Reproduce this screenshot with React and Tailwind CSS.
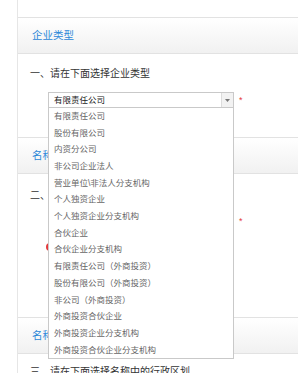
import { useState } from "react";

const options = [
  "有限责任公司",
  "股份有限公司",
  "内资分公司",
  "非公司企业法人",
  "营业单位\\非法人分支机构",
  "个人独资企业",
  "个人独资企业分支机构",
  "合伙企业",
  "合伙企业分支机构",
  "有限责任公司（外商投资）",
  "股份有限公司（外商投资）",
  "非公司（外商投资）",
  "外商投资合伙企业",
  "外商投资企业分支机构",
  "外商投资合伙企业分支机构",
];

function SectionHeader({ title }) {
  return (
    <div className="flex h-[37px] items-center border-y border-[#e2e2e2] bg-gradient-to-b from-white to-[#f1f1f1] pl-[14px] text-[10.5px] text-[#2b87d8]">
      {title}
    </div>
  );
}

function Star() {
  return <span className="ml-[5px] text-[9px] leading-none text-[#e4393c]">*</span>;
}

export default function App() {
  const [value] = useState(options[0]);

  return (
    <div
      className="h-[373px] w-[298px] overflow-hidden bg-white text-[#333]"
      style={{ fontFamily: '"Liberation Sans", "Noto Sans CJK SC", sans-serif' }}
    >
      <div className="ml-[17px] h-full border-l border-[#e6e6e6]">
        <div className="h-[17px]" />

        <SectionHeader title="企业类型" />
        <div className="h-[83px] pl-[12px] pt-[10px]">
          <div className="text-[10px] leading-[20px]">一、请在下面选择企业类型</div>
          <div className="mt-[8px] flex items-center pl-[18px]">
            <div className="relative z-10">
              <div className="flex h-[16px] w-[186px] items-center border border-[#c9c9c9] bg-white">
                <span className="flex-1 pl-[5px] text-[8.5px] text-[#222]">{value}</span>
                <span className="flex h-full w-[12px] items-center justify-center border-l border-[#dcdcdc] bg-[#f2f2f2]">
                  <svg width="5" height="3" viewBox="0 0 5 3">
                    <path d="M0 0h5L2.5 3z" fill="#777" />
                  </svg>
                </span>
              </div>
              <ul className="absolute left-0 top-full w-[186px] border border-t-0 border-[#c9c9c9] bg-white">
                {options.map((o) => (
                  <li key={o} className="flex h-[16.7px] items-center pl-[5px] text-[8.5px] text-[#666]">
                    {o}
                  </li>
                ))}
              </ul>
            </div>
            <Star />
          </div>
        </div>

        <SectionHeader title="名称信息" />
        <div className="h-[143px] pl-[12px] pt-[12px]">
          <div className="text-[10px] leading-[20px]">二、请输入名称中的字号</div>
          <div className="mt-[7px] flex items-center pl-[18px]">
            <div className="h-[16px] w-[186px] border border-[#c9c9c9]" />
            <Star />
          </div>
          <div className="mt-[13px] flex h-[10px] items-center pl-[16px]">
            <span className="h-[8px] w-[8px] rounded-full bg-[#e4393c]" />
          </div>
        </div>

        <SectionHeader title="名称行业" />
        <div className="pl-[12px] pt-[8px]">
          <div className="text-[10px] leading-[20px]">三、请在下面选择名称中的行政区划</div>
        </div>
      </div>
    </div>
  );
}
